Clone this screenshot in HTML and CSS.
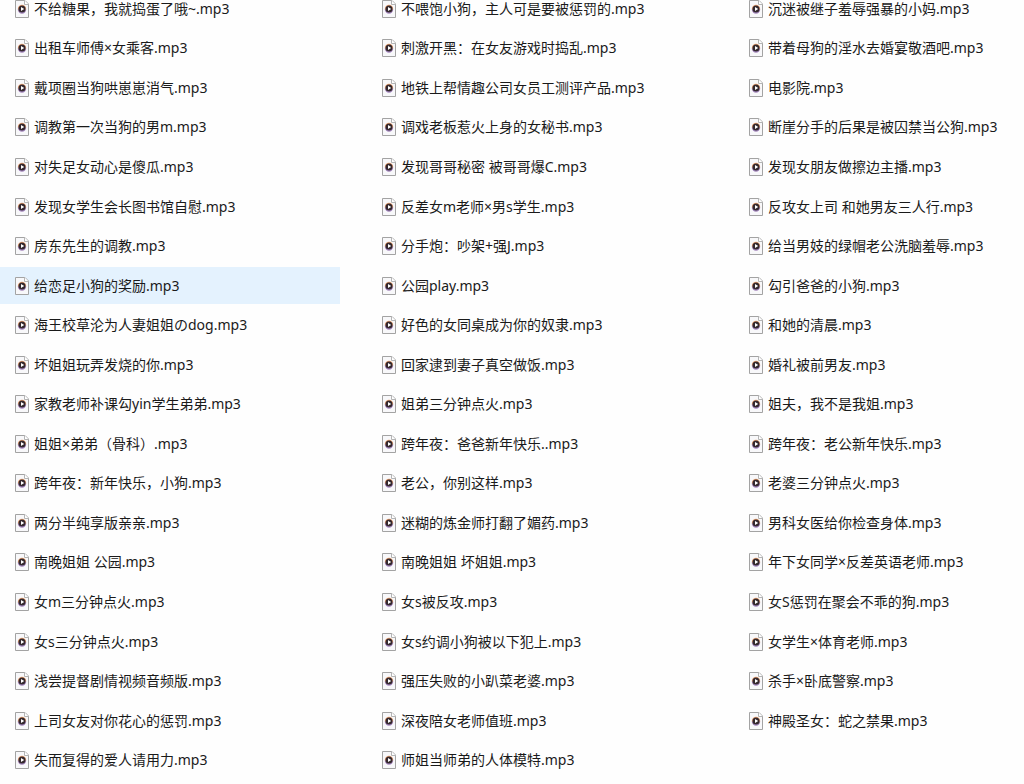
FILE: index.html
```html
<!DOCTYPE html>
<html lang="zh-CN">
<head>
<meta charset="utf-8">
<meta name="viewport" content="width=device-width, initial-scale=1">
<title>音频文件</title>
<link rel="stylesheet" href="styles.css">
</head>
<body>
<svg class="sprite" aria-hidden="true">
  <symbol id="mp3" viewBox="0 0 14 18">
    <path d="M.5 .5H10L13.5 4V17.5H.5Z" fill="#f8f8fa" stroke="#a3a3a3"/>
    <path d="M9.5 .5V4.5H13.5" fill="#fff" stroke="#b5b5b5"/>
    <circle cx="7" cy="9" r="4.2" fill="#f0a878"/>
    <path d="M2.8 9.5A4.2 4.2 0 0 0 11.2 9.5Z" fill="#a58bc4"/>
    <circle cx="7" cy="9" r="3.5" fill="#34282d"/>
    <path d="M6 6.9V11.1L9.2 9Z" fill="#fff"/>
  </symbol>
</svg>
<main>
<ul class="files">
  <li class="file"><svg class="icon"><use href="#mp3"/></svg><span>不给糖果，我就捣蛋了哦~.mp3</span></li>
  <li class="file"><svg class="icon"><use href="#mp3"/></svg><span>不喂饱小狗，主人可是要被惩罚的.mp3</span></li>
  <li class="file"><svg class="icon"><use href="#mp3"/></svg><span>沉迷被继子羞辱强暴的小妈.mp3</span></li>
  <li class="file"><svg class="icon"><use href="#mp3"/></svg><span>出租车师傅×女乘客.mp3</span></li>
  <li class="file"><svg class="icon"><use href="#mp3"/></svg><span>刺激开黑：在女友游戏时捣乱.mp3</span></li>
  <li class="file"><svg class="icon"><use href="#mp3"/></svg><span>带着母狗的淫水去婚宴敬酒吧.mp3</span></li>
  <li class="file"><svg class="icon"><use href="#mp3"/></svg><span>戴项圈当狗哄崽崽消气.mp3</span></li>
  <li class="file"><svg class="icon"><use href="#mp3"/></svg><span>地铁上帮情趣公司女员工测评产品.mp3</span></li>
  <li class="file"><svg class="icon"><use href="#mp3"/></svg><span>电影院.mp3</span></li>
  <li class="file"><svg class="icon"><use href="#mp3"/></svg><span>调教第一次当狗的男m.mp3</span></li>
  <li class="file"><svg class="icon"><use href="#mp3"/></svg><span>调戏老板惹火上身的女秘书.mp3</span></li>
  <li class="file"><svg class="icon"><use href="#mp3"/></svg><span>断崖分手的后果是被囚禁当公狗.mp3</span></li>
  <li class="file"><svg class="icon"><use href="#mp3"/></svg><span>对失足女动心是傻瓜.mp3</span></li>
  <li class="file"><svg class="icon"><use href="#mp3"/></svg><span>发现哥哥秘密 被哥哥爆C.mp3</span></li>
  <li class="file"><svg class="icon"><use href="#mp3"/></svg><span>发现女朋友做擦边主播.mp3</span></li>
  <li class="file"><svg class="icon"><use href="#mp3"/></svg><span>发现女学生会长图书馆自慰.mp3</span></li>
  <li class="file"><svg class="icon"><use href="#mp3"/></svg><span>反差女m老师×男s学生.mp3</span></li>
  <li class="file"><svg class="icon"><use href="#mp3"/></svg><span>反攻女上司 和她男友三人行.mp3</span></li>
  <li class="file"><svg class="icon"><use href="#mp3"/></svg><span>房东先生的调教.mp3</span></li>
  <li class="file"><svg class="icon"><use href="#mp3"/></svg><span>分手炮：吵架+强J.mp3</span></li>
  <li class="file"><svg class="icon"><use href="#mp3"/></svg><span>给当男妓的绿帽老公洗脑羞辱.mp3</span></li>
  <li class="file selected"><svg class="icon"><use href="#mp3"/></svg><span>给恋足小狗的奖励.mp3</span></li>
  <li class="file"><svg class="icon"><use href="#mp3"/></svg><span>公园play.mp3</span></li>
  <li class="file"><svg class="icon"><use href="#mp3"/></svg><span>勾引爸爸的小狗.mp3</span></li>
  <li class="file"><svg class="icon"><use href="#mp3"/></svg><span>海王校草沦为人妻姐姐のdog.mp3</span></li>
  <li class="file"><svg class="icon"><use href="#mp3"/></svg><span>好色的女同桌成为你的奴隶.mp3</span></li>
  <li class="file"><svg class="icon"><use href="#mp3"/></svg><span>和她的清晨.mp3</span></li>
  <li class="file"><svg class="icon"><use href="#mp3"/></svg><span>坏姐姐玩弄发烧的你.mp3</span></li>
  <li class="file"><svg class="icon"><use href="#mp3"/></svg><span>回家逮到妻子真空做饭.mp3</span></li>
  <li class="file"><svg class="icon"><use href="#mp3"/></svg><span>婚礼被前男友.mp3</span></li>
  <li class="file"><svg class="icon"><use href="#mp3"/></svg><span>家教老师补课勾yin学生弟弟.mp3</span></li>
  <li class="file"><svg class="icon"><use href="#mp3"/></svg><span>姐弟三分钟点火.mp3</span></li>
  <li class="file"><svg class="icon"><use href="#mp3"/></svg><span>姐夫，我不是我姐.mp3</span></li>
  <li class="file"><svg class="icon"><use href="#mp3"/></svg><span>姐姐×弟弟（骨科）.mp3</span></li>
  <li class="file"><svg class="icon"><use href="#mp3"/></svg><span>跨年夜：爸爸新年快乐..mp3</span></li>
  <li class="file"><svg class="icon"><use href="#mp3"/></svg><span>跨年夜：老公新年快乐.mp3</span></li>
  <li class="file"><svg class="icon"><use href="#mp3"/></svg><span>跨年夜：新年快乐，小狗.mp3</span></li>
  <li class="file"><svg class="icon"><use href="#mp3"/></svg><span>老公，你别这样.mp3</span></li>
  <li class="file"><svg class="icon"><use href="#mp3"/></svg><span>老婆三分钟点火.mp3</span></li>
  <li class="file"><svg class="icon"><use href="#mp3"/></svg><span>两分半纯享版亲亲.mp3</span></li>
  <li class="file"><svg class="icon"><use href="#mp3"/></svg><span>迷糊的炼金师打翻了媚药.mp3</span></li>
  <li class="file"><svg class="icon"><use href="#mp3"/></svg><span>男科女医给你检查身体.mp3</span></li>
  <li class="file"><svg class="icon"><use href="#mp3"/></svg><span>南晚姐姐 公园.mp3</span></li>
  <li class="file"><svg class="icon"><use href="#mp3"/></svg><span>南晚姐姐 坏姐姐.mp3</span></li>
  <li class="file"><svg class="icon"><use href="#mp3"/></svg><span>年下女同学×反差英语老师.mp3</span></li>
  <li class="file"><svg class="icon"><use href="#mp3"/></svg><span>女m三分钟点火.mp3</span></li>
  <li class="file"><svg class="icon"><use href="#mp3"/></svg><span>女s被反攻.mp3</span></li>
  <li class="file"><svg class="icon"><use href="#mp3"/></svg><span>女S惩罚在聚会不乖的狗.mp3</span></li>
  <li class="file"><svg class="icon"><use href="#mp3"/></svg><span>女s三分钟点火.mp3</span></li>
  <li class="file"><svg class="icon"><use href="#mp3"/></svg><span>女s约调小狗被以下犯上.mp3</span></li>
  <li class="file"><svg class="icon"><use href="#mp3"/></svg><span>女学生×体育老师.mp3</span></li>
  <li class="file"><svg class="icon"><use href="#mp3"/></svg><span>浅尝提督剧情视频音频版.mp3</span></li>
  <li class="file"><svg class="icon"><use href="#mp3"/></svg><span>强压失败的小趴菜老婆.mp3</span></li>
  <li class="file"><svg class="icon"><use href="#mp3"/></svg><span>杀手×卧底警察.mp3</span></li>
  <li class="file"><svg class="icon"><use href="#mp3"/></svg><span>上司女友对你花心的惩罚.mp3</span></li>
  <li class="file"><svg class="icon"><use href="#mp3"/></svg><span>深夜陪女老师值班.mp3</span></li>
  <li class="file"><svg class="icon"><use href="#mp3"/></svg><span>神殿圣女：蛇之禁果.mp3</span></li>
  <li class="file"><svg class="icon"><use href="#mp3"/></svg><span>失而复得的爱人请用力.mp3</span></li>
  <li class="file"><svg class="icon"><use href="#mp3"/></svg><span>师姐当师弟的人体模特.mp3</span></li>
</ul>
</main>
</body>
</html>
```
FILE: styles.css
```css
body {
  margin: 0;
  overflow: hidden;
  background: #fefefe;
  color: #1a1a1a;
  font: 14px/20px "Noto Sans", "Noto Sans CJK SC", sans-serif;
}

.sprite {
  display: none;
}

/* The list is scrolled a little: it runs past the window's edges. */
.files {
  display: grid;
  grid-template-columns: repeat(3, 1fr);
  grid-template-rows: repeat(20, 1fr);
  gap: 2px 27px;
  width: calc(100% + 50px);
  height: calc(100vh + 5px);
  margin: -10px 0 0;
  padding: 0;
  list-style: none;
}

.file {
  display: flex;
  align-items: center;
  gap: 5px;
  min-width: 0;
  padding-left: 15px;
  white-space: nowrap;
}

.selected {
  background: #e4f2fe;
}

.icon {
  flex: none;
  width: 14px;
  height: 18px;
}
```
